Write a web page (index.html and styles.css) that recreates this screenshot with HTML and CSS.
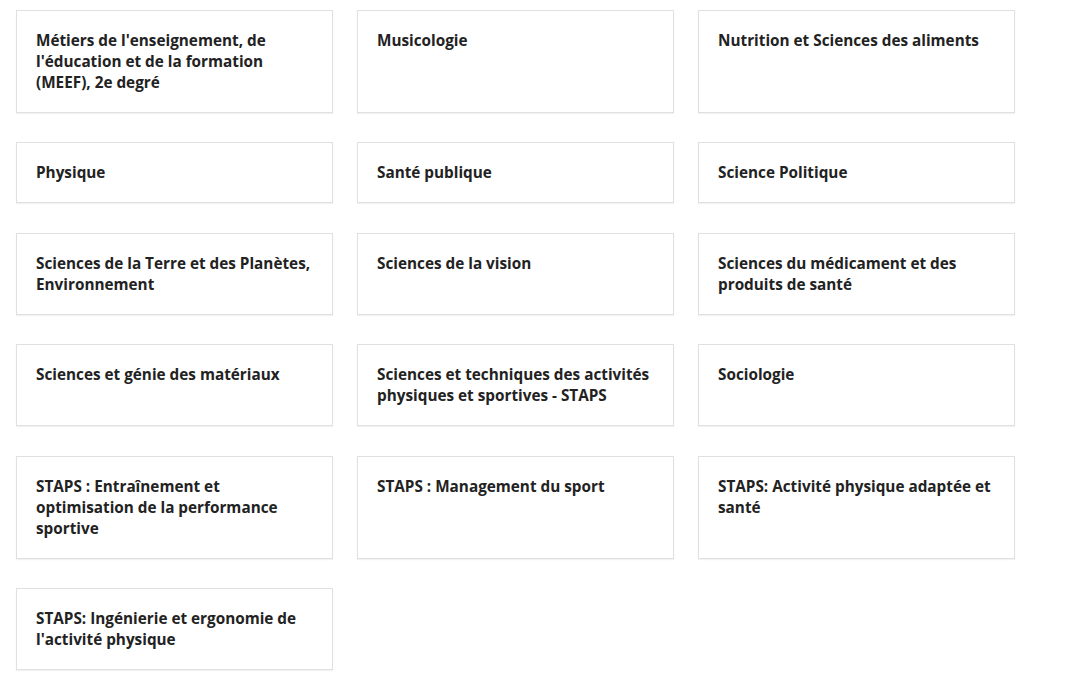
FILE: index.html
```html
<!DOCTYPE html>
<html lang="fr">
<head>
  <meta charset="UTF-8" />
  <title>Formations</title>
  <link rel="stylesheet" href="styles.css">
</head>
<body>
  <section class="program-list">
    <a class="program-card" href="#">Métiers de l'enseignement, de l'éducation et de la formation (MEEF), 2e degré</a>
    <a class="program-card" href="#">Musicologie</a>
    <a class="program-card" href="#">Nutrition et Sciences des aliments</a>

    <a class="program-card" href="#">Physique</a>
    <a class="program-card" href="#">Santé publique</a>
    <a class="program-card" href="#">Science Politique</a>

    <a class="program-card" href="#">Sciences de la Terre et des Planètes, Environnement</a>
    <a class="program-card" href="#">Sciences de la vision</a>
    <a class="program-card" href="#">Sciences du médicament et des produits de santé</a>

    <a class="program-card" href="#">Sciences et génie des matériaux</a>
    <a class="program-card" href="#">Sciences et techniques des activités physiques et sportives - STAPS</a>
    <a class="program-card" href="#">Sociologie</a>

    <a class="program-card" href="#">STAPS : Entraînement et optimisation de la performance sportive</a>
    <a class="program-card" href="#">STAPS : Management du sport</a>
    <a class="program-card" href="#">STAPS: Activité physique adaptée et santé</a>

    <a class="program-card" href="#">STAPS: Ingénierie et ergonomie de l'activité physique</a>
  </section>
</body>
</html>
```

FILE: styles.css
```css
* {
  margin: 0;
  padding: 0;
  box-sizing: border-box;
}

body {
  background: #fff;
  color: #222;
  font-family: 'Open Sans', 'Noto Sans', sans-serif;
}

.program-list {
  display: grid;
  grid-template-columns: repeat(3, 317px);
  column-gap: 24px;
  row-gap: 29.4px;
  padding: 10px 16px;
}

.program-card {
  display: block;
  border: 1px solid #e0e0e0;
  box-shadow: 0 1px 1px rgba(0, 0, 0, 0.05);
  padding: 19px 19px 19px 19px;
  font-size: 15.3px;
  font-weight: 700;
  line-height: 21px;
  color: #222;
  text-decoration: none;
}
```
